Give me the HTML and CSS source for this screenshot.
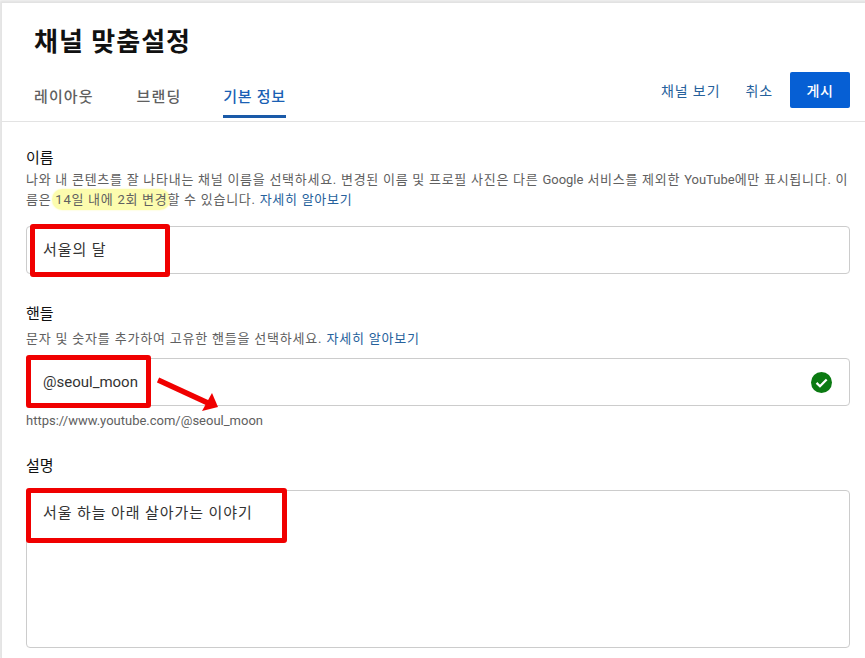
FILE: index.html
```html
<!DOCTYPE html>
<html lang="ko">
<head>
    <meta charset="UTF-8">
    <title>채널 맞춤설정</title>
    <link rel="stylesheet" href="styles.css">
</head>
<body>
    <div class="page">
        <header class="top">
            <h1 class="title">채널 맞춤설정</h1>
            <div class="bar">
                <nav class="tabs">
                    <a class="tab">레이아웃</a>
                    <a class="tab">브랜딩</a>
                    <a class="tab active">기본 정보</a>
                </nav>
                <div class="actions">
                    <a class="action">채널 보기</a>
                    <a class="action">취소</a>
                    <button class="publish">게시</button>
                </div>
            </div>
        </header>

        <main class="content">
            <section class="group name-group">
                <h2 class="label">이름</h2>
                <p class="desc">나와 내 콘텐츠를 잘 나타내는 채널 이름을 선택하세요. 변경된 이름 및 프로필 사진은 다른 <span class="latin">Google</span> 서비스를 제외한 <span class="latin">YouTube</span>에만 표시됩니다. 이<br>름은 <span class="marker">14일 내에 2회 변경</span>할 수 있습니다. <a class="link">자세히 알아보기</a></p>
                <div class="field">
                    <span class="value hangul">서울의 달</span>
                    <div class="redbox box-name"></div>
                </div>
            </section>

            <section class="group handle-group">
                <h2 class="label">핸들</h2>
                <p class="desc wide">문자 및 숫자를 추가하여 고유한 핸들을 선택하세요. <a class="link">자세히 알아보기</a></p>
                <div class="field">
                    <span class="value">@seoul_moon</span>
                    <svg class="check" viewBox="0 0 22 22" width="21" height="21">
                        <circle cx="11" cy="11" r="11" fill="#0b7a12"/>
                        <path d="M5.8 11.4l3.6 3.5 7-7" fill="none" stroke="#fff" stroke-width="2.4"/>
                    </svg>
                    <div class="redbox box-handle"></div>
                    <svg class="arrow" viewBox="0 0 70 36" width="70" height="36">
                        <path d="M1 3L51 26" stroke="#f00000" stroke-width="5.5" fill="none"/>
                        <path d="M61 30L45 34L50 25L55 16Z" fill="#f00000"/>
                    </svg>
                </div>
                <p class="url">https://www.youtube.com/@seoul_moon</p>
            </section>

            <section class="group desc-group">
                <h2 class="label">설명</h2>
                <div class="field area">
                    <span class="value hangul">서울 하늘 아래 살아가는 이야기</span>
                    <div class="redbox box-desc"></div>
                </div>
            </section>
        </main>
    </div>
</body>
</html>
```

FILE: styles.css
```css
/* Page */
html, body {
    height: 100%;
}
body {
    margin: 0;
    background: #fff;
    color: #0d0d0d;
    font-family: Roboto, "Noto Sans CJK KR", sans-serif;
    overflow: hidden;
}
.page {
    height: 655px;
    margin-top: 3px;
    margin-left: 1px;
    border-left: 1px solid #e4e4e4;
    box-shadow: 0 -1px 3px 2px rgba(0, 0, 0, 0.12);
}

/* Header */
.top {
    height: 119px;
    border-bottom: 1px solid #e3e3e3;
    box-sizing: border-box;
    padding-left: 32px;
}
.title {
    margin: 0;
    padding-top: 21px;
    font-size: 26px;
    line-height: 36px;
    font-weight: 700;
    letter-spacing: 1px;
    color: #111;
}
.bar {
    display: flex;
    justify-content: space-between;
    padding-right: 15px;
    margin-top: 12px;
}
.tabs {
    display: flex;
    gap: 43px;
}
.tab {
    height: 46px;
    box-sizing: border-box;
    padding-top: 14px;
    font-size: 15px;
    line-height: 22px;
    font-weight: 500;
    letter-spacing: 1.1px;
    color: #606060;
}
.tab.active {
    margin-left: -1px;
    letter-spacing: 0.7px;
    color: #1a5fb4;
    border-bottom: 3px solid #1a5aa8;
}
.actions {
    display: flex;
    align-items: center;
    height: 36px;
}
.action {
    margin-right: 25px;
    font-size: 14px;
    letter-spacing: 0.9px;
    color: #26619c;
}
.publish {
    width: 60px;
    height: 36px;
    margin-left: -8px;
    border: none;
    border-radius: 2px;
    background: #065fd4;
    color: #fff;
    font-family: inherit;
    font-size: 14px;
    font-weight: 500;
    letter-spacing: 0.7px;
}

/* Form */
.content {
    padding: 27px 15px 0 24px;
}
.group {
    margin: 0;
}
.handle-group {
    margin-top: 31px;
}
.desc-group {
    margin-top: 27px;
}
.label {
    margin: 0;
    font-size: 15px;
    line-height: 18px;
    font-weight: 400;
    color: #111;
}
.desc {
    margin: 3px 0 0;
    font-size: 13px;
    line-height: 20px;
    letter-spacing: 0.73px;
    color: #606060;
}
.desc.wide {
    letter-spacing: 0.8px;
}
.latin {
    letter-spacing: 0;
}
.link {
    color: #26619c;
}
.marker {
    margin: 0 -3px;
    padding: 3px;
    border-radius: 10px;
    background: #fcfcae;
    box-shadow: 0 0 2px #fcfcae;
}
.name-group .field {
    margin-top: 16px;
}
.handle-group .desc {
    margin-top: 6px;
}
.handle-group .field {
    margin-top: 9px;
}
.desc-group .field {
    margin-top: 15px;
}
.field {
    position: relative;
    display: flex;
    justify-content: space-between;
    align-items: center;
    height: 48px;
    box-sizing: border-box;
    padding: 0 17px 0 16px;
    border: 1px solid #ccc;
    border-radius: 4px;
}
.field.area {
    height: 158px;
    align-items: flex-start;
    padding-top: 11px;
}
.value {
    font-size: 15px;
    line-height: 22px;
    color: #333;
}
.value.hangul {
    letter-spacing: 0.9px;
}
.url {
    margin: 6px 0 0;
    font-size: 13px;
    line-height: 18px;
    color: #606060;
}
.check {
    display: block;
}

/* Red annotations drawn over the form */
.redbox {
    position: absolute;
    box-sizing: border-box;
    border: 5px solid #f00000;
    border-radius: 3px;
}
.box-name {
    left: 3px;
    top: -3px;
    width: 140px;
    height: 53px;
}
.box-handle {
    left: -1px;
    top: -4px;
    width: 125px;
    height: 53px;
}
.box-desc {
    left: -1px;
    top: -3px;
    width: 261px;
    height: 55px;
}
.arrow {
    position: absolute;
    left: 130px;
    top: 18px;
}
```
